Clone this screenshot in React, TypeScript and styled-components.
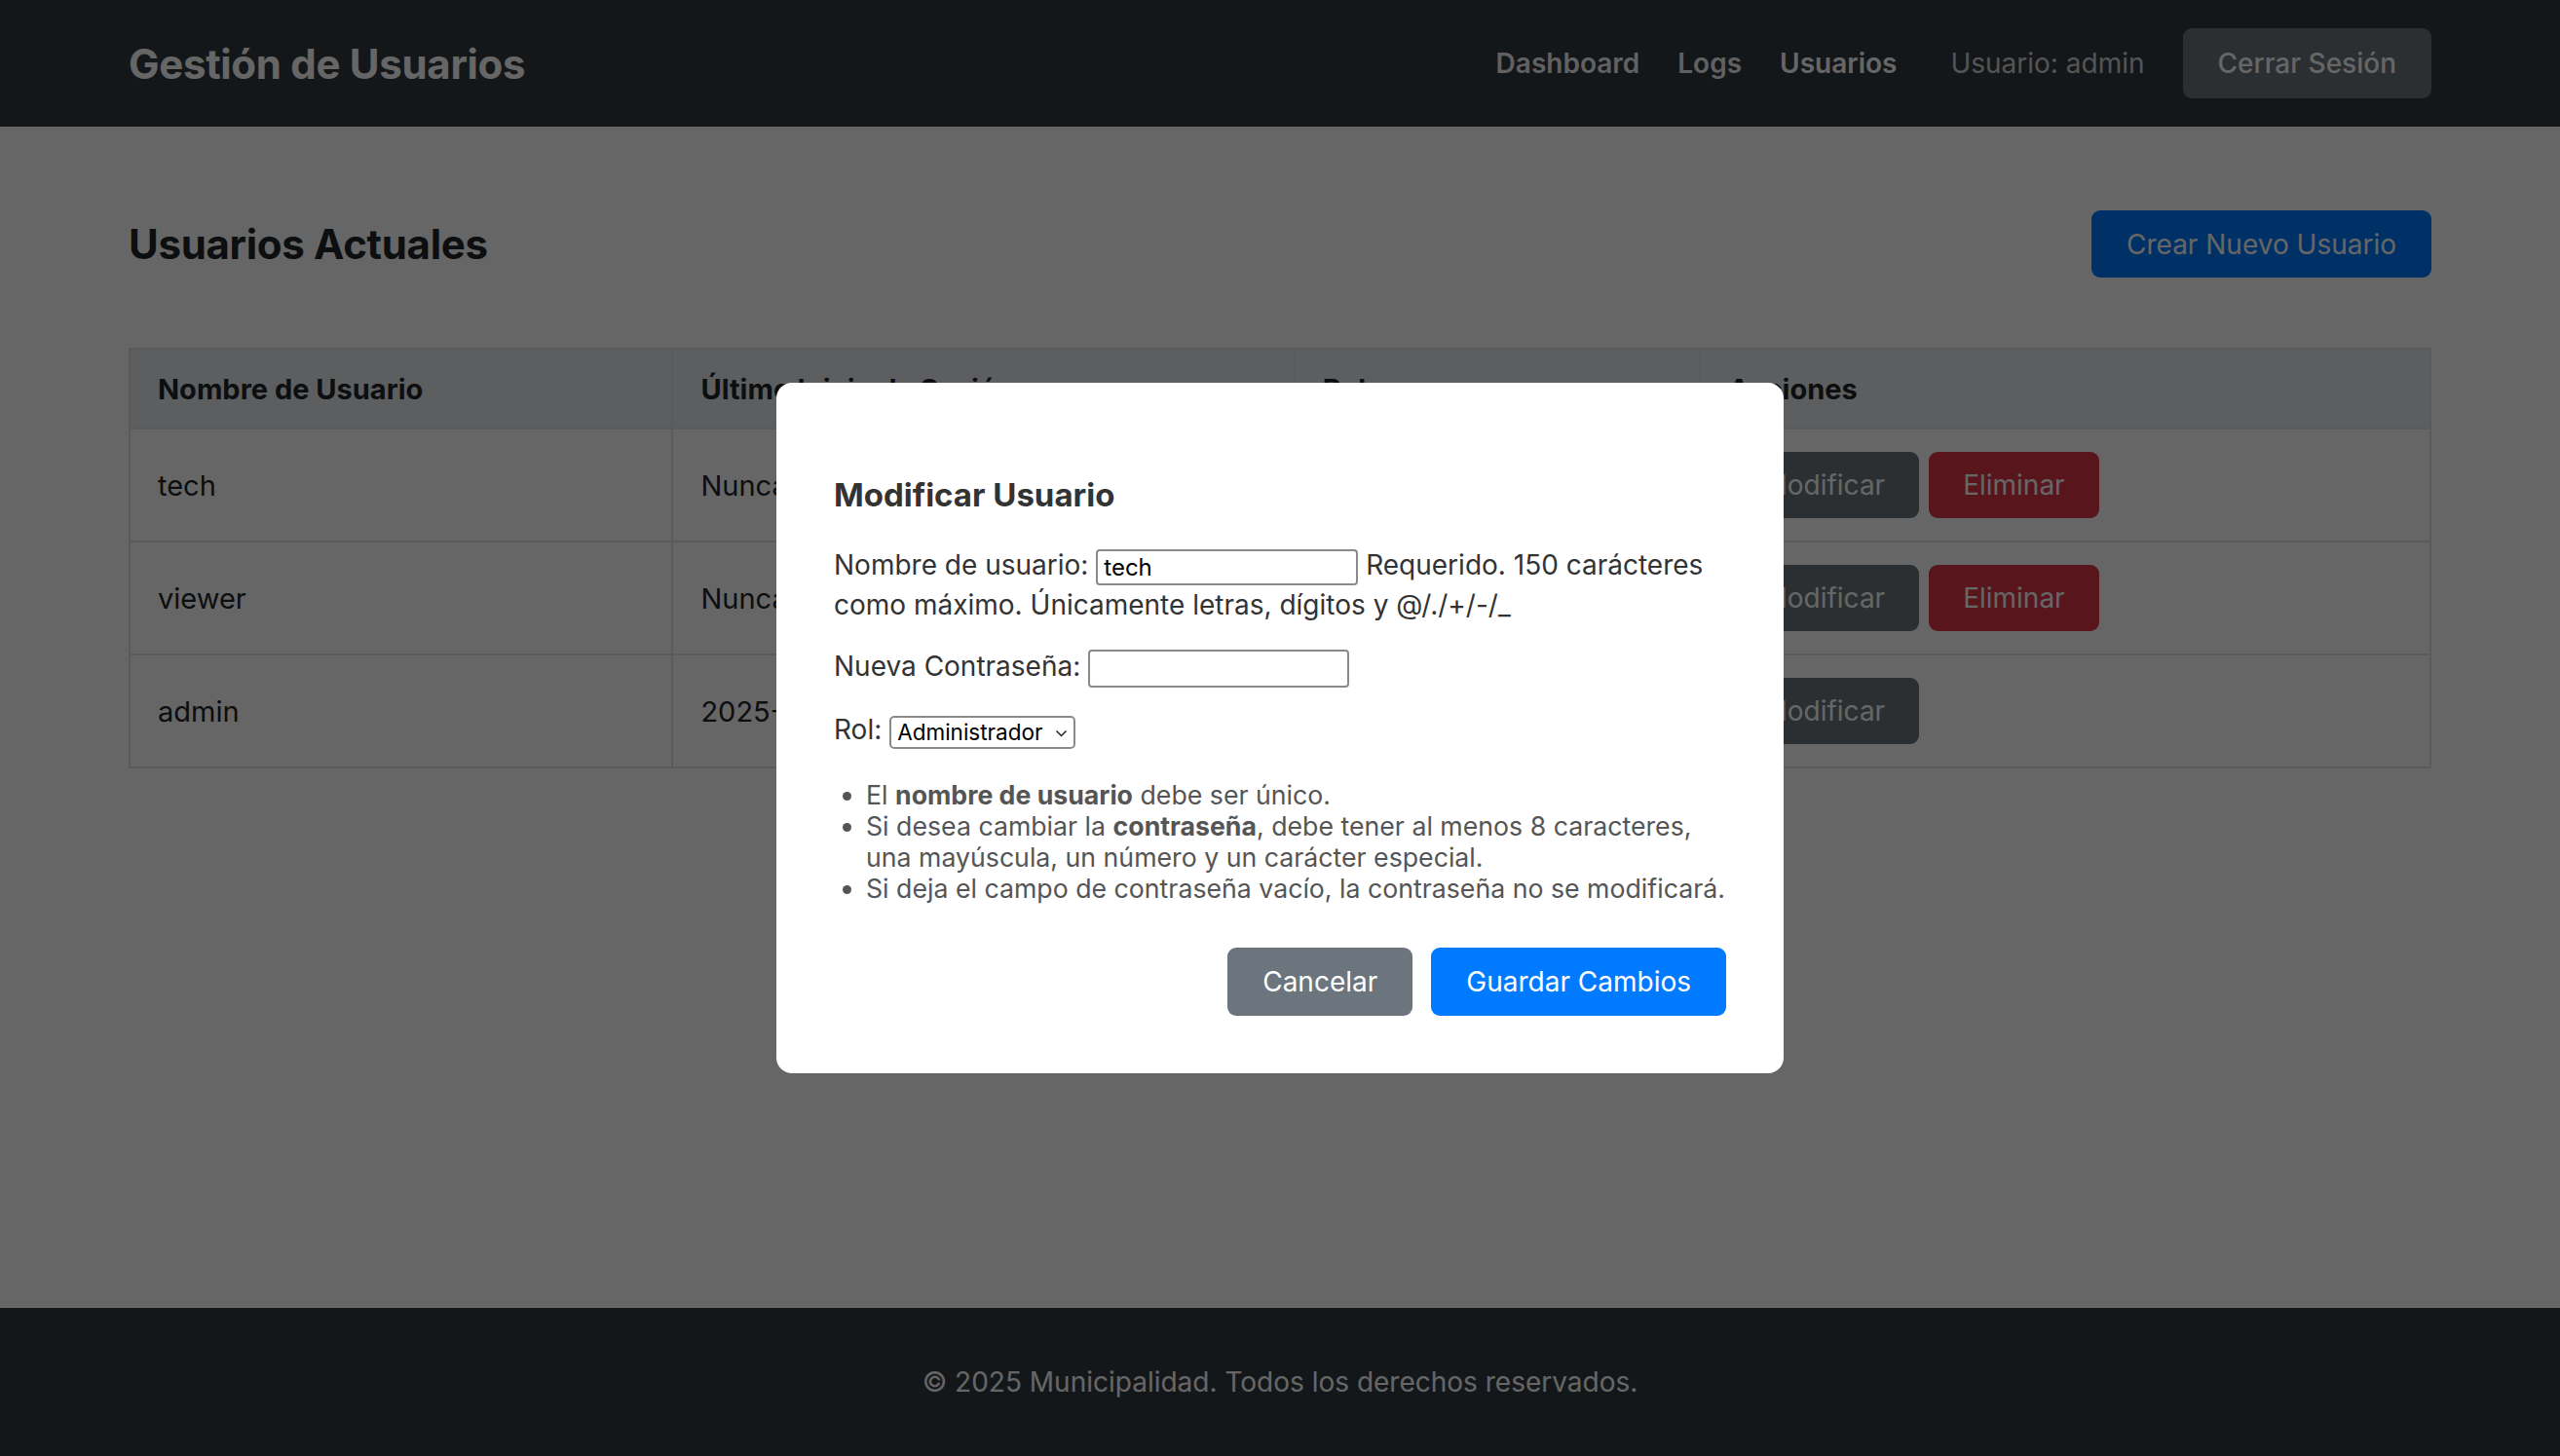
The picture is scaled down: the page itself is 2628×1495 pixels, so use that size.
import React from 'react';
import styled, { createGlobalStyle, css } from 'styled-components';

const GlobalStyle = createGlobalStyle`
  html, body {
    margin: 0;
    padding: 0;
  }
  body {
    font-family: Inter, "Liberation Sans", sans-serif;
    color: #212529;
    background: #fff;
  }
  * {
    box-sizing: border-box;
  }
`;

type Variant = 'primary' | 'secondary' | 'danger';

const variantColors: Record<Variant, string> = {
  primary: '#007bff',
  secondary: '#6c757d',
  danger: '#dc3545',
};

const Page = styled.div`
  min-height: 1495px;
  display: flex;
  flex-direction: column;
`;

const Navbar = styled.nav`
  height: 130px;
  background: #343a40;
  display: flex;
  align-items: center;
  justify-content: space-between;
  padding: 0 132px;
`;

const Brand = styled.a`
  font-size: 42px;
  font-weight: 700;
  color: #fff;
  text-decoration: none;
  letter-spacing: -0.3px;
`;

const NavRight = styled.div`
  display: flex;
  align-items: center;
  gap: 39px;
`;

const NavLink = styled.a<{ $active?: boolean }>`
  font-size: 28px;
  font-weight: 600;
  color: rgba(255, 255, 255, 0.95);
  text-decoration: none;
  ${p =>
    p.$active &&
    css`
      color: #fff;
    `}
`;

const UserLabel = styled.span`
  margin-left: 16px;
  font-size: 28px;
  color: rgba(255, 255, 255, 0.78);
`;

const Button = styled.button<{ $variant: Variant; $height?: number; $weight?: number; $pad?: number }>`
  height: ${p => p.$height || 70}px;
  padding: 0 ${p => p.$pad || 36}px;
  border: none;
  border-radius: 9px;
  font-family: inherit;
  font-size: 28px;
  font-weight: ${p => p.$weight || 400};
  color: #fff;
  background: ${p => variantColors[p.$variant]};
  cursor: pointer;
  white-space: nowrap;
`;

const Main = styled.main`
  flex: 1;
  padding: 86px 132px 40px;
`;

const HeaderRow = styled.div`
  display: flex;
  align-items: center;
  justify-content: space-between;
  margin-bottom: 72px;
`;

const PageTitle = styled.h2`
  margin: 0;
  font-size: 42px;
  font-weight: 700;
  color: #212529;
  letter-spacing: -0.3px;
`;

const Table = styled.table`
  width: 100%;
  border-collapse: collapse;
  font-size: 29px;
  border: 2px solid #dee2e6;
`;

const HeadCell = styled.th<{ $w: number }>`
  width: ${p => p.$w}px;
  height: 82px;
  padding: 0 28px;
  text-align: left;
  font-weight: 700;
  background: #e9ecef;
  border: 2px solid #dee2e6;
`;

const Cell = styled.td`
  height: 116px;
  padding: 0 28px;
  border: 2px solid #dee2e6;
`;

const ActionGroup = styled.div`
  display: flex;
  gap: 10px;
`;

const Footer = styled.footer`
  height: 152px;
  background: #343a40;
  color: #fff;
  display: flex;
  align-items: center;
  justify-content: center;
  font-size: 28px;
`;

const Overlay = styled.div`
  position: fixed;
  inset: 0;
  background: rgba(0, 0, 0, 0.6);
  display: flex;
  align-items: center;
  justify-content: center;
`;

const Modal = styled.div`
  width: 1034px;
  background: #fff;
  border-radius: 16px;
  padding: 59px;
  color: #333;
`;

const ModalTitle = styled.h3`
  margin: 37px 0 32px;
  font-size: 33px;
  font-weight: 700;
  color: #333;
  line-height: 1.2;
`;

const FormRow = styled.p`
  margin: 0 0 23px;
  font-size: 28px;
  line-height: 40px;
`;

const TextInput = styled.input<{ $w: number; $h: number }>`
  width: ${p => p.$w}px;
  height: ${p => p.$h}px;
  padding: 0 6px;
  border: 2px solid #8a8a8a;
  border-radius: 4px;
  font-family: inherit;
  font-size: 24px;
  color: #000;
  vertical-align: middle;
`;

const SelectWrap = styled.span`
  position: relative;
  display: inline-flex;
  align-items: center;
  vertical-align: middle;
  line-height: 0;
`;

const Select = styled.select`
  appearance: none;
  width: 191px;
  height: 34px;
  padding: 0 24px 0 6px;
  border: 2px solid #8a8a8a;
  border-radius: 5px;
  background: #fff;
  font-family: inherit;
  font-size: 22.5px;
  line-height: normal;
  color: #000;
`;

const Chevron = styled.svg`
  position: absolute;
  right: 8px;
  top: 50%;
  margin-top: -3px;
  pointer-events: none;
`;

const HintList = styled.ul`
  margin: 31px 0 45px;
  padding-left: 33px;
  font-size: 26.7px;
  line-height: 32px;
  color: #555;
`;

const ModalActions = styled.div`
  display: flex;
  justify-content: flex-end;
  gap: 19px;
`;

const users = [
  { name: 'tech', last: 'Nunca', role: 'Técnico', canDelete: true },
  { name: 'viewer', last: 'Nunca', role: 'Visualizador', canDelete: true },
  { name: 'admin', last: '2025-01-15 09:42', role: 'Administrador', canDelete: false },
];

const App: React.FC = () => {
  return (
    <>
      <GlobalStyle />
      <Page>
        <Navbar>
          <Brand>Gestión de Usuarios</Brand>
          <NavRight>
            <NavLink>Dashboard</NavLink>
            <NavLink>Logs</NavLink>
            <NavLink $active>Usuarios</NavLink>
            <UserLabel>Usuario: admin</UserLabel>
            <Button $variant="secondary" $height={72} $weight={500}>
              Cerrar Sesión
            </Button>
          </NavRight>
        </Navbar>
        <Main>
          <HeaderRow>
            <PageTitle>Usuarios Actuales</PageTitle>
            <Button $variant="primary" $height={69}>
              Crear Nuevo Usuario
            </Button>
          </HeaderRow>
          <Table>
            <thead>
              <tr>
                <HeadCell $w={558}>Nombre de Usuario</HeadCell>
                <HeadCell $w={639}>Último Inicio de Sesión</HeadCell>
                <HeadCell $w={417}>Rol</HeadCell>
                <HeadCell $w={750}>Acciones</HeadCell>
              </tr>
            </thead>
            <tbody>
              {users.map(u => (
                <tr key={u.name}>
                  <Cell>{u.name}</Cell>
                  <Cell>{u.last}</Cell>
                  <Cell>{u.role}</Cell>
                  <Cell>
                    <ActionGroup>
                      <Button $variant="secondary" $height={68} $pad={35}>
                        Modificar
                      </Button>
                      {u.canDelete && (
                        <Button $variant="danger" $height={68} $pad={35}>
                          Eliminar
                        </Button>
                      )}
                    </ActionGroup>
                  </Cell>
                </tr>
              ))}
            </tbody>
          </Table>
        </Main>
        <Footer>© 2025 Municipalidad. Todos los derechos reservados.</Footer>
      </Page>
      <Overlay>
        <Modal>
          <ModalTitle>Modificar Usuario</ModalTitle>
          <FormRow>
            Nombre de usuario: <TextInput $w={269} $h={37} defaultValue="tech" /> Requerido. 150
            carácteres como máximo. Únicamente letras, dígitos y @/./+/-/_
          </FormRow>
          <FormRow>
            Nueva Contraseña: <TextInput type="password" $w={268} $h={39} />
          </FormRow>
          <FormRow>
            Rol:{' '}
            <SelectWrap>
              <Select defaultValue="admin">
                <option value="admin">Administrador</option>
                <option value="tech">Técnico</option>
                <option value="viewer">Visualizador</option>
              </Select>
              <Chevron width="13" height="8" viewBox="0 0 13 8">
                <path d="M1.5 1.5 L6.5 6.5 L11.5 1.5" fill="none" stroke="#222" strokeWidth="1.5" />
              </Chevron>
            </SelectWrap>
          </FormRow>
          <HintList>
            <li>
              El <strong>nombre de usuario</strong> debe ser único.
            </li>
            <li>
              Si desea cambiar la <strong>contraseña</strong>, debe tener al menos 8 caracteres,
              una mayúscula, un número y un carácter especial.
            </li>
            <li>Si deja el campo de contraseña vacío, la contraseña no se modificará.</li>
          </HintList>
          <ModalActions>
            <Button $variant="secondary">Cancelar</Button>
            <Button $variant="primary">Guardar Cambios</Button>
          </ModalActions>
        </Modal>
      </Overlay>
    </>
  );
};

export default App;
